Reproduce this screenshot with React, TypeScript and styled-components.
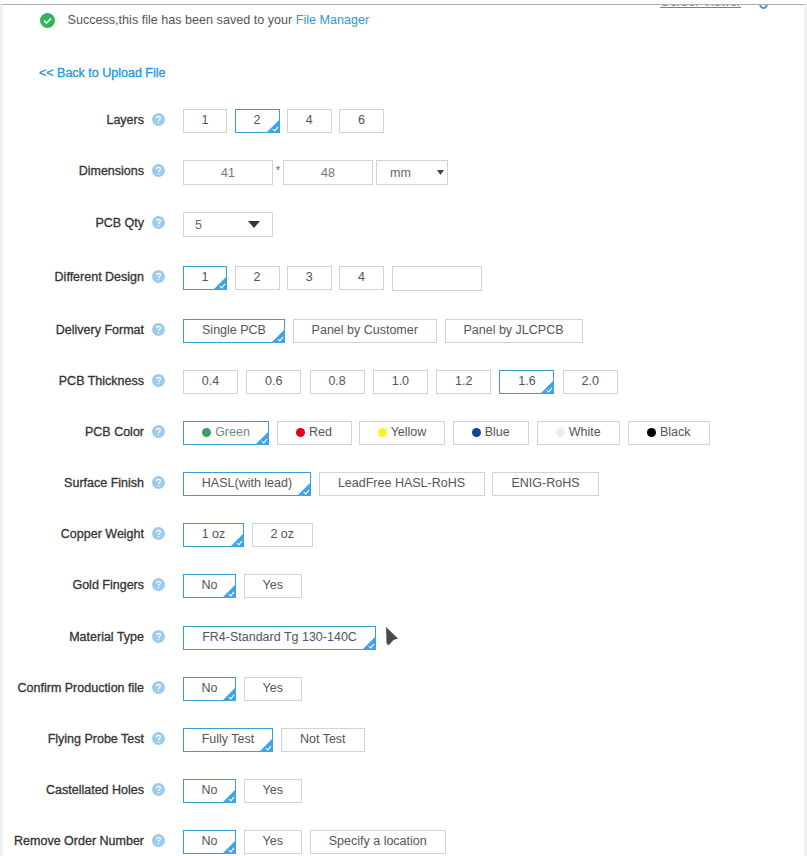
import React from 'react';
import styled, { createGlobalStyle } from 'styled-components';

const Global = createGlobalStyle`
  html, body { margin: 0; padding: 0; background: #fff; }
  body { font-family: "Liberation Sans", Arial, sans-serif; font-size: 12.6px; color: #666; }
`;

const Page = styled.div`
  width: 807px; height: 856px; overflow: hidden; padding-top: 4px; box-sizing: border-box; background: #fff;
`;
const Panel = styled.main`
  position: relative; height: 852px; box-sizing: border-box; overflow: hidden;
  border-top: 1px solid #adadad; border-left: 3px solid #f1f1f1; border-right: 3px solid #f1f1f1;
`;
const ViewerLink = styled.a`
  position: absolute; top: -10px; left: 657px; line-height: 15px; font-size: 12.6px; color: #2a9ad6; text-decoration: underline;
`;
const ViewerRing = styled.span`
  position: absolute; top: -7px; left: 756px; width: 9px; height: 11px; border: 2px solid #5b93c6; border-radius: 50%; box-sizing: border-box;
`;
const Notice = styled.div`
  display: flex; align-items: center; height: 30px; padding-left: 37px; gap: 12.5px; color: #555; font-size: 12.6px;
`;
const FileLink = styled.a` color: #2b9bd8; `;
const BackLink = styled.a`
  display: block; margin: 28px 0 26px 36px; line-height: 20px; font-size: 12.5px; color: #1b96e0; -webkit-text-stroke: 0.3px #1b96e0;
`;
const Row = styled.div<{ $after: number }>`
  display: flex; align-items: flex-start; height: 24px; margin-bottom: ${p => p.$after}px;
`;
const Label = styled.label`
  flex: 0 0 141px; text-align: right; line-height: 22px; font-size: 12.5px; color: #333; white-space: nowrap; -webkit-text-stroke: 0.3px #333;
`;
const Help = styled.svg`
  flex: none; width: 13px; height: 13px; margin: 4px 18px 0 8px;
`;
const Controls = styled.div<{ $gap?: number }>`
  display: flex; align-items: flex-start; gap: ${p => p.$gap ?? 7.5}px;
`;
const Option = styled.div<{ $w: number; $on?: boolean }>`
  position: relative; display: flex; align-items: center; justify-content: center; gap: 4px; box-sizing: border-box;
  width: ${p => p.$w}px; height: 24px; padding-bottom: 2px; background: #fff; font-size: 12.5px; color: #555; white-space: nowrap;
  border: 1px solid ${p => (p.$on ? '#3d9bd6' : '#d2d2d2')};
`;
const Corner = styled.svg`
  position: absolute; right: -1px; bottom: -1px; width: 14px; height: 14px;
`;
const Dot = styled.i<{ $c: string }>`
  flex: none; width: 9px; height: 9px; border-radius: 50%; background: ${p => p.$c};
`;
const FieldRow = styled.div` display: flex; align-items: flex-start; `;
const NumField = styled.input<{ $w: number }>`
  width: ${p => p.$w}px; height: 25px; box-sizing: border-box; border: 1px solid #d2d2d2; background: #fff; padding: 0; outline: none;
  text-align: center; font: 12.5px "Liberation Sans", Arial, sans-serif; color: #777; border-radius: 0;
`;
const Star = styled.span`
  width: 10px; text-align: center; font-size: 11px; line-height: 20px; color: #666;
`;
const Dropdown = styled.div<{ $w: number; $offset?: number }>`
  display: flex; align-items: center; justify-content: space-between; box-sizing: border-box; width: ${p => p.$w}px; height: 25px;
  margin-left: ${p => p.$offset ?? 0}px; border: 1px solid #d2d2d2; font-size: 12.5px; color: #666;
`;
const PlainSelectText = styled.span<{ $l: number }>` margin-left: ${p => p.$l}px; `;
const Arrow = styled.svg<{ $r: number }>` margin-right: ${p => p.$r}px; flex: none; `;
const Cursor = styled.svg`
  position: absolute; left: 382px; top: 622px; width: 14px; height: 20px;
`;

const HelpIcon = () => (
  <Help viewBox="0 0 13 13" aria-hidden>
    <circle cx="6.5" cy="6.5" r="6.5" fill="#9bcbee" />
    <path d="M4.6 5.2c0-1.1.9-1.8 1.9-1.8s1.9.7 1.9 1.7c0 1.4-1.9 1.4-1.9 2.8" fill="none" stroke="#fff" strokeWidth="1.3" />
    <circle cx="6.5" cy="9.8" r=".8" fill="#fff" />
  </Help>
);
const CornerMark = () => (
  <Corner viewBox="0 0 14 14" aria-hidden>
    <path d="M14 0V14H0Z" fill="#3fa3ea" />
    <path d="M6.8 10.2l2 1.7 3.2-4" fill="none" stroke="#fff" strokeWidth="1.1" />
  </Corner>
);

type Opt = { t: string; w: number; on?: boolean; dot?: string; color?: string };
type Spec = { label: string; after: number; opts: Opt[]; gap?: number };

const yesNo = (after: number, label: string): Spec => ({
  label, after, opts: [{ t: 'No', w: 53, on: true }, { t: 'Yes', w: 58.5 }],
});

const Options = ({ opts, gap }: { opts: Opt[]; gap?: number }) => (
  <Controls $gap={gap}>
    {opts.map(o => (
      <Option key={o.t} $w={o.w} $on={o.on} style={o.color ? { color: o.color } : undefined}>
        {o.dot && <Dot $c={o.dot} />}
        {o.t}
        {o.on && <CornerMark />}
      </Option>
    ))}
  </Controls>
);

const t = 55;
const lower: Spec[] = [
  { label: 'Delivery Format', after: 27, opts: [{ t: 'Single PCB', w: 102, on: true }, { t: 'Panel by Customer', w: 144.5 }, { t: 'Panel by JLCPCB', w: 138 }] },
  { label: 'PCB Thickness', after: 27, gap: 8.3, opts: [{ t: '0.4', w: t }, { t: '0.6', w: t }, { t: '0.8', w: t }, { t: '1.0', w: t }, { t: '1.2', w: t }, { t: '1.6', w: t, on: true }, { t: '2.0', w: t }] },
  { label: 'PCB Color', after: 27, opts: [
    { t: 'Green', w: 86, on: true, dot: '#3b9e68', color: '#6f8f7c' },
    { t: 'Red', w: 75, dot: '#e0001b' },
    { t: 'Yellow', w: 86, dot: '#fff01f' },
    { t: 'Blue', w: 76.5, dot: '#0c479d' },
    { t: 'White', w: 83.5, dot: '#ececec' },
    { t: 'Black', w: 82.5, dot: '#000' },
  ] },
  { label: 'Surface Finish', after: 27, opts: [{ t: 'HASL(with lead)', w: 128, on: true }, { t: 'LeadFree HASL-RoHS', w: 166 }, { t: 'ENIG-RoHS', w: 107 }] },
  { label: 'Copper Weight', after: 27, opts: [{ t: '1 oz', w: 61, on: true }, { t: '2 oz', w: 61.5 }] },
  yesNo(28, 'Gold Fingers'),
  { label: 'Material Type', after: 27, opts: [{ t: 'FR4-Standard Tg 130-140C', w: 193, on: true }] },
  yesNo(27, 'Confirm Production file'),
  { label: 'Flying Probe Test', after: 27, opts: [{ t: 'Fully Test', w: 90, on: true }, { t: 'Not Test', w: 84.5 }] },
  yesNo(27, 'Castellated Holes'),
  { label: 'Remove Order Number', after: 0, opts: [{ t: 'No', w: 53, on: true }, { t: 'Yes', w: 58.5 }, { t: 'Specify a location', w: 136.5 }] },
];

export default function App() {
  return (
    <Page>
      <Global />
      <Panel>
        <ViewerLink>Gerber Viewer</ViewerLink>
        <ViewerRing />
        <Notice>
          <svg width="15" height="15" viewBox="0 0 15 15" aria-hidden>
            <circle cx="7.5" cy="7.5" r="7.5" fill="#2fb457" />
            <path d="M4 7.6l2.5 2.4 4.5-4.6" fill="none" stroke="#fff" strokeWidth="1.7" />
          </svg>
          <span>Success,this file has been saved to your <FileLink>File Manager</FileLink></span>
        </Notice>
        <BackLink>&lt;&lt; Back to Upload File</BackLink>

        <Row $after={27}>
          <Label>Layers</Label><HelpIcon />
          <Options opts={[{ t: '1', w: 44 }, { t: '2', w: 45, on: true }, { t: '4', w: 44.5 }, { t: '6', w: 45 }]} />
        </Row>
        <Row $after={28}>
          <Label>Dimensions</Label><HelpIcon />
          <FieldRow>
            <NumField $w={90} defaultValue="41" readOnly />
            <Star>*</Star>
            <NumField $w={90} defaultValue="48" readOnly />
            <Dropdown $w={72} $offset={3}>
              <PlainSelectText $l={13}>mm</PlainSelectText>
              <Arrow $r={3} width="7" height="5" viewBox="0 0 7 5" aria-hidden><path d="M0 0h7L3.5 5z" fill="#444" /></Arrow>
            </Dropdown>
          </FieldRow>
        </Row>
        <Row $after={30}>
          <Label>PCB Qty</Label><HelpIcon />
          <Dropdown $w={90}>
            <PlainSelectText $l={11}>5</PlainSelectText>
            <Arrow $r={12} width="12" height="7" viewBox="0 0 12 7" aria-hidden><path d="M0 0h12L6 7z" fill="#333" /></Arrow>
          </Dropdown>
        </Row>
        <Row $after={29}>
          <Label>Different Design</Label><HelpIcon />
          <Controls>
            <Options opts={[{ t: '1', w: 44, on: true }, { t: '2', w: 45 }, { t: '3', w: 44.5 }, { t: '4', w: 45 }]} />
            <NumField $w={90} readOnly />
          </Controls>
        </Row>
        {lower.map(r => (
          <Row key={r.label} $after={r.after}>
            <Label>{r.label}</Label><HelpIcon />
            <Options opts={r.opts} gap={r.gap} />
          </Row>
        ))}
        <Cursor viewBox="0 0 14 20" aria-hidden>
          <path d="M1 0L13 11.5 8.5 13 3.5 18.5 1.5 16z" fill="#4a4a4a" />
        </Cursor>
      </Panel>
    </Page>
  );
}
